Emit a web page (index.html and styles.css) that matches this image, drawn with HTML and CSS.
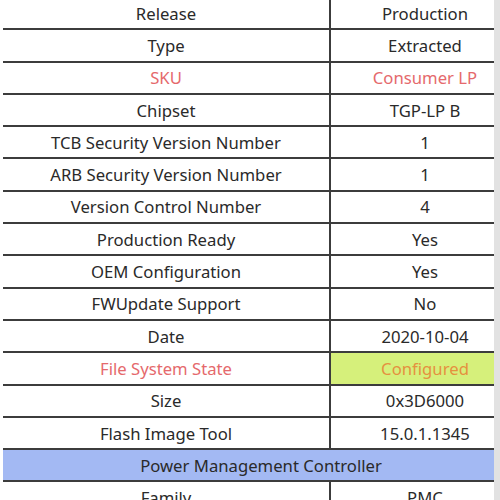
FILE: index.html
```html
<!DOCTYPE html>
<html>
<head>
<meta charset="utf-8">
<link rel="stylesheet" href="styles.css">
</head>
<body>
<div class="frame">
  <div class="sheet">
    <div class="row"><div class="k">Release</div><div class="v">Production</div></div>
    <div class="row"><div class="k">Type</div><div class="v">Extracted</div></div>
    <div class="row red"><div class="k">SKU</div><div class="v">Consumer LP</div></div>
    <div class="row"><div class="k">Chipset</div><div class="v">TGP-LP B</div></div>
    <div class="row"><div class="k">TCB Security Version Number</div><div class="v">1</div></div>
    <div class="row"><div class="k">ARB Security Version Number</div><div class="v">1</div></div>
    <div class="row"><div class="k">Version Control Number</div><div class="v">4</div></div>
    <div class="row"><div class="k">Production Ready</div><div class="v">Yes</div></div>
    <div class="row"><div class="k">OEM Configuration</div><div class="v">Yes</div></div>
    <div class="row"><div class="k">FWUpdate Support</div><div class="v">No</div></div>
    <div class="row"><div class="k">Date</div><div class="v">2020-10-04</div></div>
    <div class="row red"><div class="k">File System State</div><div class="v hl">Configured</div></div>
    <div class="row"><div class="k">Size</div><div class="v">0x3D6000</div></div>
    <div class="row"><div class="k">Flash Image Tool</div><div class="v">15.0.1.1345</div></div>
    <div class="row section"><div class="full">Power Management Controller</div></div>
    <div class="row"><div class="k">Family</div><div class="v">PMC</div></div>
  </div>
  <div class="edge"></div>
</div>
</body>
</html>
```

FILE: styles.css
```css
html, body {
  margin: 0;
  padding: 0;
  background: #ffffff;
}
body {
  width: 500px;
  height: 500px;
  overflow: hidden;
  font-family: "Noto Sans", "Open Sans", sans-serif;
  font-size: 16.7px;
  color: #2a2a2a;
}
.frame {
  display: flex;
  height: 500px;
}
.sheet {
  width: 491px;
  margin-left: 3px;
  margin-top: -2px;
  overflow: hidden;
}
.edge {
  width: 6px;
  background: #e2e2e2;
  height: 500px;
}
.row {
  display: grid;
  grid-template-columns: 328px 188px;
  width: 516px;
  height: 32.3px;
  box-sizing: border-box;
  border-bottom: 2px solid #3c3c3c;
}
.k, .v, .full {
  display: flex;
  align-items: center;
  justify-content: center;
  white-space: nowrap;
}
.k {
  border-right: 2px solid #3c3c3c;
}
.red .k, .red .v {
  color: #e5696c;
}
.red .v.hl {
  background: #d6f07b;
  color: #e5913f;
}
.section {
  display: flex;
  background: #a3b9f3;
}
.full {
  flex: 1;
}
```
